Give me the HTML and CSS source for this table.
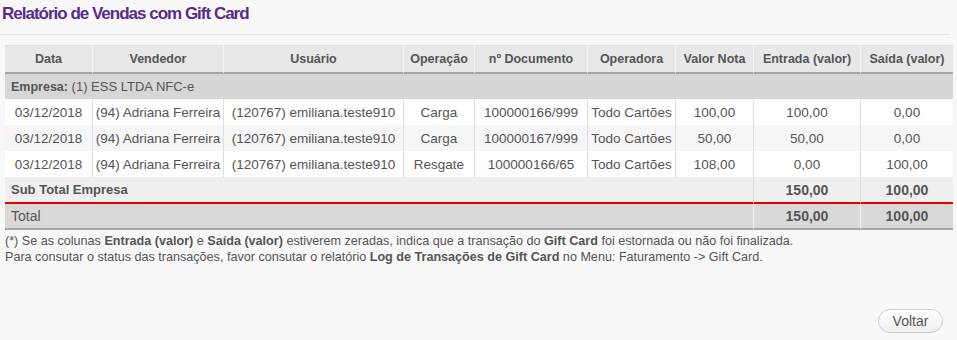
FILE: index.html
```html
<!DOCTYPE html>
<html lang="pt-BR">
<head>
<meta charset="utf-8">
<title>Relatório de Vendas com Gift Card</title>
<link rel="stylesheet" href="styles.css">
</head>
<body>
<div class="page">
  <h1 class="title">Relatório de Vendas com Gift Card</h1>
  <div class="sep"></div>
  <table class="report">
    <colgroup>
      <col class="c-data"><col class="c-vend"><col class="c-user"><col class="c-op"><col class="c-doc"><col class="c-opr"><col class="c-val"><col class="c-ent"><col class="c-sai">
    </colgroup>
    <thead>
      <tr>
        <th>Data</th><th>Vendedor</th><th>Usuário</th><th>Operação</th><th>nº Documento</th><th>Operadora</th><th>Valor Nota</th><th>Entrada (valor)</th><th>Saída (valor)</th>
      </tr>
    </thead>
    <tbody>
      <tr class="group"><td colspan="9"><b>Empresa:</b> (1) ESS LTDA NFC-e</td></tr>
      <tr class="row">
        <td>03/12/2018</td><td>(94) Adriana Ferreira</td><td>(120767) emiliana.teste910</td><td>Carga</td><td>100000166/999</td><td>Todo Cartões</td><td>100,00</td><td>100,00</td><td>0,00</td>
      </tr>
      <tr class="row alt">
        <td>03/12/2018</td><td>(94) Adriana Ferreira</td><td>(120767) emiliana.teste910</td><td>Carga</td><td>100000167/999</td><td>Todo Cartões</td><td>50,00</td><td>50,00</td><td>0,00</td>
      </tr>
      <tr class="row">
        <td>03/12/2018</td><td>(94) Adriana Ferreira</td><td>(120767) emiliana.teste910</td><td>Resgate</td><td>100000166/65</td><td>Todo Cartões</td><td>108,00</td><td>0,00</td><td>100,00</td>
      </tr>
      <tr class="subtotal">
        <td colspan="7" class="label">Sub Total Empresa</td><td>150,00</td><td>100,00</td>
      </tr>
      <tr class="total">
        <td colspan="7" class="label">Total</td><td>150,00</td><td>100,00</td>
      </tr>
    </tbody>
  </table>
  <div class="notes">
    <p>(*) Se as colunas <b>Entrada (valor)</b> e <b>Saída (valor)</b> estiverem zeradas, indica que a transação do <b>Gift Card</b> foi estornada ou não foi finalizada.</p>
    <p>Para consutar o status das transações, favor consutar o relatório <b>Log de Transações de Gift Card</b> no Menu: Faturamento -&gt; Gift Card.</p>
  </div>
  <div class="actions">
    <button class="btn" type="button">Voltar</button>
  </div>
</div>
</body>
</html>
```
FILE: styles.css
```css
html, body {
  margin: 0;
  padding: 0;
  background: #f8f8f8;
}
body {
  font-family: "Liberation Sans", Arial, sans-serif;
  color: #555;
}
.page {
  width: 957px;
  height: 340px;
}
.title {
  margin: 0;
  padding: 3px 0 0 2px;
  height: 31px;
  box-sizing: border-box;
  font-size: 17px;
  font-weight: bold;
  letter-spacing: -1px;
  color: #5a2a8c;
  line-height: 22px;
}
.sep {
  width: 950px;
  height: 1px;
  background: #e8e8e8;
  margin-top: 3px;
}
.report {
  margin: 10px 0 0 5px;
  width: 948px;
  table-layout: fixed;
  border-collapse: separate;
  border-spacing: 0;
  font-size: 13.5px;
  color: #555;
}
.c-data { width: 87px; }
.c-vend { width: 131px; }
.c-user { width: 180px; }
.c-op { width: 71px; }
.c-doc { width: 113px; }
.c-opr { width: 88px; }
.c-val { width: 78px; }
.c-ent { width: 107px; }
.c-sai { width: 93px; }

.report th {
  background: #e8e8e8;
  font-size: 12.5px;
  font-weight: bold;
  height: 26px;
  padding: 0;
  border-top: 1px solid #e0e0e0;
  border-bottom: 2px solid #a6a6a6;
  border-left: 1px solid #f4f4f4;
  text-align: center;
  color: #555;
  white-space: nowrap;
}
.report th:first-child { border-left: 0; }
.report td {
  padding: 0;
  text-align: center;
  white-space: nowrap;
}
.group td {
  background: #d6d6d6;
  height: 25px;
  text-align: left;
  padding-left: 6px;
  font-size: 13px;
}
.group b { font-size: 12.5px; }
.row td {
  background: #fff;
  height: 26px;
  border-left: 1px solid #dedede;
}
.row td:first-child { border-left: 0; }
.row.alt td { background: #f6f6f6; }
.subtotal td {
  background: #efefef;
  height: 25px;
  border-bottom: 2px solid #e60000;
  border-left: 1px solid #dedede;
  font-weight: bold;
  font-size: 14px;
}
.subtotal td.label {
  border-left: 0;
  text-align: left;
  padding-left: 6px;
  font-size: 13px;
}
.total td {
  background: #d9d9d9;
  height: 24px;
  border-bottom: 2px solid #a6a6a6;
  border-left: 1px solid #f0f0f0;
  font-weight: bold;
  font-size: 14px;
}
.total td.label {
  border-left: 0;
  text-align: left;
  padding-left: 6px;
  font-weight: normal;
}
.notes {
  margin: 3px 0 0 5px;
  font-size: 12.6px;
  line-height: 16px;
  color: #555;
}
.notes p { margin: 0; }
.notes b { color: #555; }
.actions {
  display: flex;
  justify-content: flex-end;
  padding: 44px 14px 0 0;
}
.btn {
  width: 65px;
  height: 24px;
  border: 1px solid #cfcfcf;
  border-radius: 12px;
  background: linear-gradient(#ffffff, #efefef);
  font-family: "Liberation Sans", Arial, sans-serif;
  font-size: 14px;
  color: #555;
  padding: 0;
}
```
